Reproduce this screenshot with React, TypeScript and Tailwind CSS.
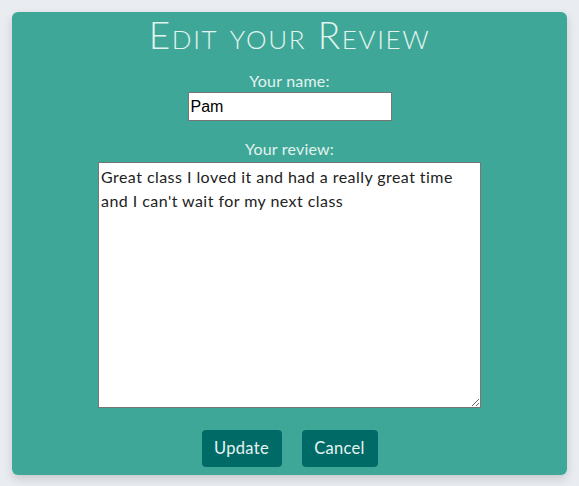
import React from "react";

export default function App() {
  return (
    <div className="min-h-screen bg-[#e9edf1] p-3" style={{ fontFamily: "Lato, 'Noto Sans', sans-serif" }}>
      <div className="h-[463px] rounded-md bg-[#3ea797] shadow-[0_4px_10px_rgba(0,0,0,0.15)] flex flex-col items-center pt-[3px]">
        <h1 className="text-[37px] leading-[40px] font-light text-[#e3f3f0] [font-variant:small-caps] tracking-[1.6px]">
          Edit your Review
        </h1>
        <label className="mt-[16px] text-[16px] leading-[20px] text-[#e3f3f0] tracking-[0.2px]">Your name:</label>
        <input
          defaultValue="Pam"
          className="mt-[1px] w-[204px] h-[29px] bg-white border border-[#767676] px-[2px] text-[16px] text-black outline-none"
          style={{ fontFamily: "'Liberation Sans', Arial, sans-serif" }}
        />
        <label className="mt-[18px] text-[16px] leading-[20px] text-[#e3f3f0] tracking-[0.2px]">Your review:</label>
        <textarea
          defaultValue={"Great class I loved it and had a really great time and I can't wait for my next class"}
          className="mt-[3px] w-[383px] h-[246px] bg-white border border-[#767676] p-[2px] text-[16px] leading-[24px] tracking-[0.45px] text-[#222] outline-none resize"
        />
        <div className="mt-[22px] flex gap-5">
          <button className="w-[80px] h-[37px] rounded bg-[#006b66] text-[16.5px] tracking-[0.3px] text-[#e6f4f2]">Update</button>
          <button className="w-[76px] h-[37px] rounded bg-[#006b66] text-[16.5px] tracking-[0.3px] text-[#e6f4f2]">Cancel</button>
        </div>
      </div>
    </div>
  );
}
